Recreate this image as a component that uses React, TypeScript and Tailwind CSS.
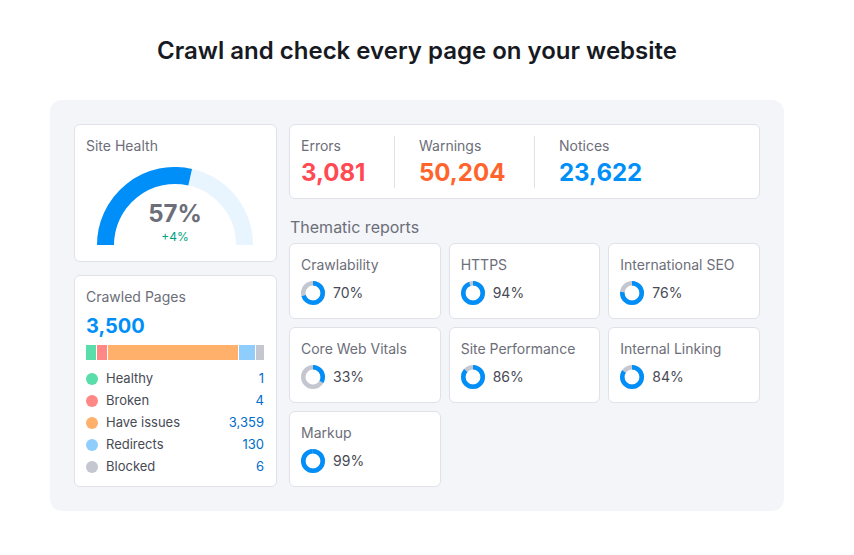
import React from 'react';

interface Report {
  name: string;
  value: number;
}

interface PageType {
  label: string;
  count: string;
  dot: string;
}

const reports: Report[] = [
  { name: 'Crawlability', value: 70 },
  { name: 'HTTPS', value: 94 },
  { name: 'International SEO', value: 76 },
  { name: 'Core Web Vitals', value: 33 },
  { name: 'Site Performance', value: 86 },
  { name: 'Internal Linking', value: 84 },
  { name: 'Markup', value: 99 },
];

const pageTypes: PageType[] = [
  { label: 'Healthy', count: '1', dot: 'bg-[#59ddaa]' },
  { label: 'Broken', count: '4', dot: 'bg-[#ff8786]' },
  { label: 'Have issues', count: '3,359', dot: 'bg-[#ffb06a]' },
  { label: 'Redirects', count: '130', dot: 'bg-[#8fcdfd]' },
  { label: 'Blocked', count: '6', dot: 'bg-[#c4c7cf]' },
];

const Donut = ({ value }: { value: number }) => {
  const r = 9.75;
  const c = 2 * Math.PI * r;
  return (
    <svg width="24" height="24" viewBox="0 0 24 24">
      <circle cx="12" cy="12" r={r} fill="none" stroke="#c4c7cf" strokeWidth="4.5" />
      <circle
        cx="12"
        cy="12"
        r={r}
        fill="none"
        stroke="#008ff8"
        strokeWidth="4.5"
        strokeDasharray={`${(c * value) / 100} ${c}`}
        transform="rotate(-90 12 12)"
      />
    </svg>
  );
};

const Gauge = ({ value }: { value: number }) => {
  const r = 69.5;
  const a = Math.PI - (Math.PI * value) / 100;
  const ex = 78 + r * Math.cos(a);
  const ey = 78 - r * Math.sin(a);
  return (
    <div className="relative w-[156px] h-[78px]">
      <svg width="156" height="78" viewBox="0 0 156 78">
        <path d={`M ${78 - r} 78 A ${r} ${r} 0 0 1 ${78 + r} 78`} fill="none" stroke="#e9f5fe" strokeWidth="17" />
        <path d={`M ${78 - r} 78 A ${r} ${r} 0 0 1 ${ex} ${ey}`} fill="none" stroke="#008ff8" strokeWidth="17" />
      </svg>
      <div className="absolute left-0 right-0 top-[32px] flex flex-col items-center">
        <span className="text-[24px] leading-[30px] font-bold text-[#6c6e79]">{value}%</span>
        <span className="text-[12px] leading-[14px] text-[#009f81] mt-[1px]">+4%</span>
      </div>
    </div>
  );
};

export default function App() {
  return (
    <div className="w-[834px] min-h-[555px] bg-white flex flex-col items-center" style={{ fontFamily: 'Inter, "Noto Sans", sans-serif' }}>
      <h1 className="mt-[35px] text-[24px] leading-[32px] font-semibold text-[#171a22]">
        Crawl and check every page on your website
      </h1>

      <div className="mt-[33px] w-[734px] bg-[#f4f5f9] rounded-xl p-6 flex gap-3">
        {/* left column */}
        <div className="w-[203px] flex flex-col gap-[13px]">
          <div className="h-[138px] bg-white border border-[#e0e1e9] rounded-md pl-[11px] pr-3 pt-[11px] flex flex-col items-center">
            <div className="self-start text-[14px] leading-5 text-[#6c6e79]">Site Health</div>
            <div className="mt-[11px]">
              <Gauge value={57} />
            </div>
          </div>

          <div className="h-[212px] bg-white border border-[#e0e1e9] rounded-md pl-[11px] pr-3 pt-[11px]">
            <div className="text-[14px] leading-5 text-[#6c6e79]">Crawled Pages</div>
            <div className="mt-[5px] text-[20px] leading-[28px] font-bold text-[#008ff8]">3,500</div>
            <div className="mt-[5px] h-[15px] flex gap-px">
              <div className="w-[10px] bg-[#59ddaa]" />
              <div className="w-[10px] bg-[#ff8786]" />
              <div className="w-[130px] bg-[#ffb06a]" />
              <div className="w-[16px] bg-[#8fcdfd]" />
              <div className="flex-1 bg-[#c4c7cf]" />
            </div>
            <div className="mt-[8px] flex flex-col">
              {pageTypes.map((p) => (
                <div key={p.label} className="h-[22px] flex items-center text-[13px]">
                  <span className="w-3 h-3 rounded-full shrink-0 overflow-hidden">
                    <span className={`block w-3 h-3 ${p.dot}`} />
                  </span>
                  <span className="ml-2 text-[#484a54]">{p.label}</span>
                  <span className="ml-auto text-[#006dca]">{p.count}</span>
                </div>
              ))}
            </div>
          </div>
        </div>

        {/* right column */}
        <div className="flex-1 flex flex-col">
          <div className="h-[75px] bg-white border border-[#e0e1e9] rounded-md pl-[11px] pr-3 pt-[11px] flex">
            <div className="w-[94px] h-[52px] border-r border-[#e0e1e9]">
              <div className="text-[14px] leading-5 text-[#6c6e79]">Errors</div>
              <div className="mt-[3px] text-[24px] leading-[28px] font-bold text-[#ff4953]">3,081</div>
            </div>
            <div className="w-[140px] h-[52px] pl-6 border-r border-[#e0e1e9]">
              <div className="text-[14px] leading-5 text-[#6c6e79]">Warnings</div>
              <div className="mt-[3px] text-[24px] leading-[28px] font-bold text-[#ff642d]">50,204</div>
            </div>
            <div className="h-[52px] pl-6">
              <div className="text-[14px] leading-5 text-[#6c6e79]">Notices</div>
              <div className="mt-[3px] text-[24px] leading-[28px] font-bold text-[#008ff8]">23,622</div>
            </div>
          </div>

          <div className="mt-4 ml-px text-[16px] leading-6 text-[#6c6e79]">Thematic reports</div>

          <div className="mt-1 grid grid-cols-3 gap-2">
            {reports.map((r) => (
              <div key={r.name} className="h-[76px] bg-white border border-[#e0e1e9] rounded-md pl-[11px] pr-3 pt-[11px]">
                <div className="text-[14px] leading-5 text-[#6c6e79] whitespace-nowrap">{r.name}</div>
                <div className="mt-[6px] flex items-center gap-2">
                  <Donut value={r.value} />
                  <span className="text-[14px] leading-5 text-[#484a54] -mt-px">{r.value}%</span>
                </div>
              </div>
            ))}
          </div>
        </div>
      </div>
    </div>
  );
}
